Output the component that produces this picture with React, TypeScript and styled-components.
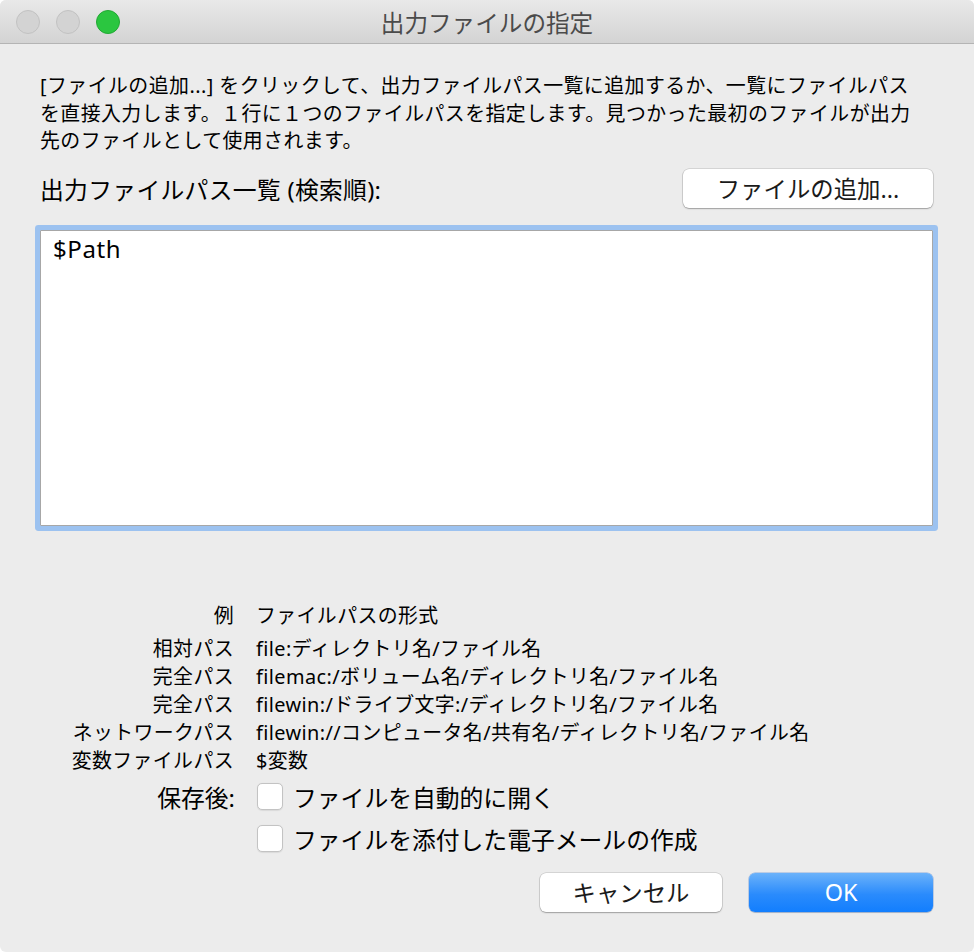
import React from "react";
import styled, { createGlobalStyle } from "styled-components";

const Global = createGlobalStyle`
  html, body { margin: 0; padding: 0; background: #ffffff; }
  body { font-family: "Noto Sans", "Noto Sans CJK JP", sans-serif; color: #000; }
  * { box-sizing: border-box; }
`;

const Window = styled.div`
  width: 974px;
  height: 952px;
  background: #ececec;
  border-radius: 6px;
  overflow: hidden;
  display: flex;
  flex-direction: column;
`;

const TitleBar = styled.div`
  height: 44px;
  flex: none;
  position: relative;
  display: flex;
  align-items: center;
  justify-content: center;
  background: linear-gradient(#e9e9e9, #d3d3d3);
  border-bottom: 1px solid #b4b4b4;
`;

const Lights = styled.div`
  position: absolute;
  left: 16px;
  top: 10px;
  display: flex;
  gap: 16px;
`;

const Light = styled.span<{ $color: string; $border: string }>`
  width: 24px;
  height: 24px;
  border-radius: 50%;
  background: ${(p) => p.$color};
  border: 1px solid ${(p) => p.$border};
`;

const Title = styled.div`
  font-size: 23.6px;
  color: #4b4b4b;
  font-family: "Noto Sans CJK JP", sans-serif;
`;

const Body = styled.div`
  flex: 1;
  display: flex;
  flex-direction: column;
  padding: 28px 41px 0 40px;
`;

const Description = styled.p`
  margin: 0;
  font-size: 19.9px;
  line-height: 27.6px;
  letter-spacing: 0.45px;
  white-space: nowrap;
`;

const ListHeader = styled.div`
  margin-top: 14px;
  display: flex;
  align-items: center;
  justify-content: space-between;
`;

const Label = styled.span`
  font-size: 23.8px;
  letter-spacing: 0.3px;
`;

const PushButton = styled.button<{ $primary?: boolean; $width: number }>`
  width: ${(p) => p.$width}px;
  height: 39px;
  border-radius: 6px;
  border: none;
  font-family: "Noto Sans", "Noto Sans CJK JP", sans-serif;
  font-size: 23.4px;
  padding: 0;
  color: ${(p) => (p.$primary ? "#fff" : "#1a1a1a")};
  background: ${(p) =>
    p.$primary
      ? "linear-gradient(#6bb2fa, #2a8bfc 55%, #127efe)"
      : "#ffffff"};
  box-shadow: ${(p) =>
    p.$primary
      ? "0 0 0 0.5px rgba(0,80,200,0.4), 0 1px 1px rgba(0,0,0,0.15)"
      : "0 0 0 0.5px rgba(0,0,0,0.2), 0 1px 1.5px rgba(0,0,0,0.25)"};
`;

const ListBox = styled.div`
  margin-top: 22px;
  height: 296px;
  background: #fff;
  border: 1px solid #a7a7a7;
  box-shadow: 0 0 0 5px #9cc2f0;
  border-radius: 1px;
  padding: 3px 12px;
  font-size: 24px;
  line-height: 30px;
  letter-spacing: 0.6px;
`;

const Examples = styled.div`
  margin-top: 76px;
  display: grid;
  grid-template-columns: 194px 1fr;
  column-gap: 22px;
  font-size: 19.9px;
  line-height: 28px;
  letter-spacing: 0.4px;
`;

const ExKey = styled.div<{ $head?: boolean }>`
  text-align: right;
  margin-bottom: ${(p) => (p.$head ? "5px" : "0")};
`;

const ExVal = styled.div<{ $head?: boolean }>`
  white-space: nowrap;
  margin-bottom: ${(p) => (p.$head ? "5px" : "0")};
`;

const Options = styled.div`
  margin-top: 4px;
  display: grid;
  grid-template-columns: 195px 1fr;
  column-gap: 22px;
  row-gap: 7px;
  font-size: 23.8px;
  align-items: center;
`;

const OptKey = styled.div`
  text-align: right;
`;

const CheckRow = styled.label`
  display: flex;
  align-items: center;
  gap: 10px;
  white-space: nowrap;
`;

const Box = styled.span`
  width: 26px;
  height: 27px;
  border-radius: 5px;
  background: #fff;
  border: 1px solid #c3c3c3;
  box-shadow: 0 0.5px 1px rgba(0,0,0,0.08);
  flex: none;
`;

const Footer = styled.div`
  margin-top: 17px;
  display: flex;
  justify-content: flex-end;
  gap: 27px;
`;

const examples: [string, string][] = [
  ["相対パス", "file:ディレクトリ名/ファイル名"],
  ["完全パス", "filemac:/ボリューム名/ディレクトリ名/ファイル名"],
  ["完全パス", "filewin:/ドライブ文字:/ディレクトリ名/ファイル名"],
  ["ネットワークパス", "filewin://コンピュータ名/共有名/ディレクトリ名/ファイル名"],
  ["変数ファイルパス", "$変数"],
];

export default function App() {
  return (
    <>
      <Global />
      <Window>
        <TitleBar>
          <Lights>
            <Light $color="#d3d3d3" $border="#c2c2c2" />
            <Light $color="#d3d3d3" $border="#c2c2c2" />
            <Light $color="#2bc640" $border="#22a934" />
          </Lights>
          <Title>出力ファイルの指定</Title>
        </TitleBar>
        <Body>
          <Description>
            [ファイルの追加...] をクリックして、出力ファイルパス一覧に追加するか、一覧にファイルパス
            <br />
            を直接入力します。１行に１つのファイルパスを指定します。見つかった最初のファイルが出力
            <br />
            先のファイルとして使用されます。
          </Description>
          <ListHeader>
            <Label>出力ファイルパス一覧 (検索順):</Label>
            <PushButton $width={250}>ファイルの追加...</PushButton>
          </ListHeader>
          <ListBox>$Path</ListBox>
          <Examples>
            <ExKey $head>例</ExKey>
            <ExVal $head>ファイルパスの形式</ExVal>
            {examples.map(([k, v], i) => (
              <React.Fragment key={i}>
                <ExKey>{k}</ExKey>
                <ExVal>{v}</ExVal>
              </React.Fragment>
            ))}
          </Examples>
          <Options>
            <OptKey>保存後:</OptKey>
            <CheckRow>
              <Box />
              ファイルを自動的に開く
            </CheckRow>
            <OptKey />
            <CheckRow>
              <Box />
              ファイルを添付した電子メールの作成
            </CheckRow>
          </Options>
          <Footer>
            <PushButton $width={182}>キャンセル</PushButton>
            <PushButton $primary $width={184}>OK</PushButton>
          </Footer>
        </Body>
      </Window>
    </>
  );
}
